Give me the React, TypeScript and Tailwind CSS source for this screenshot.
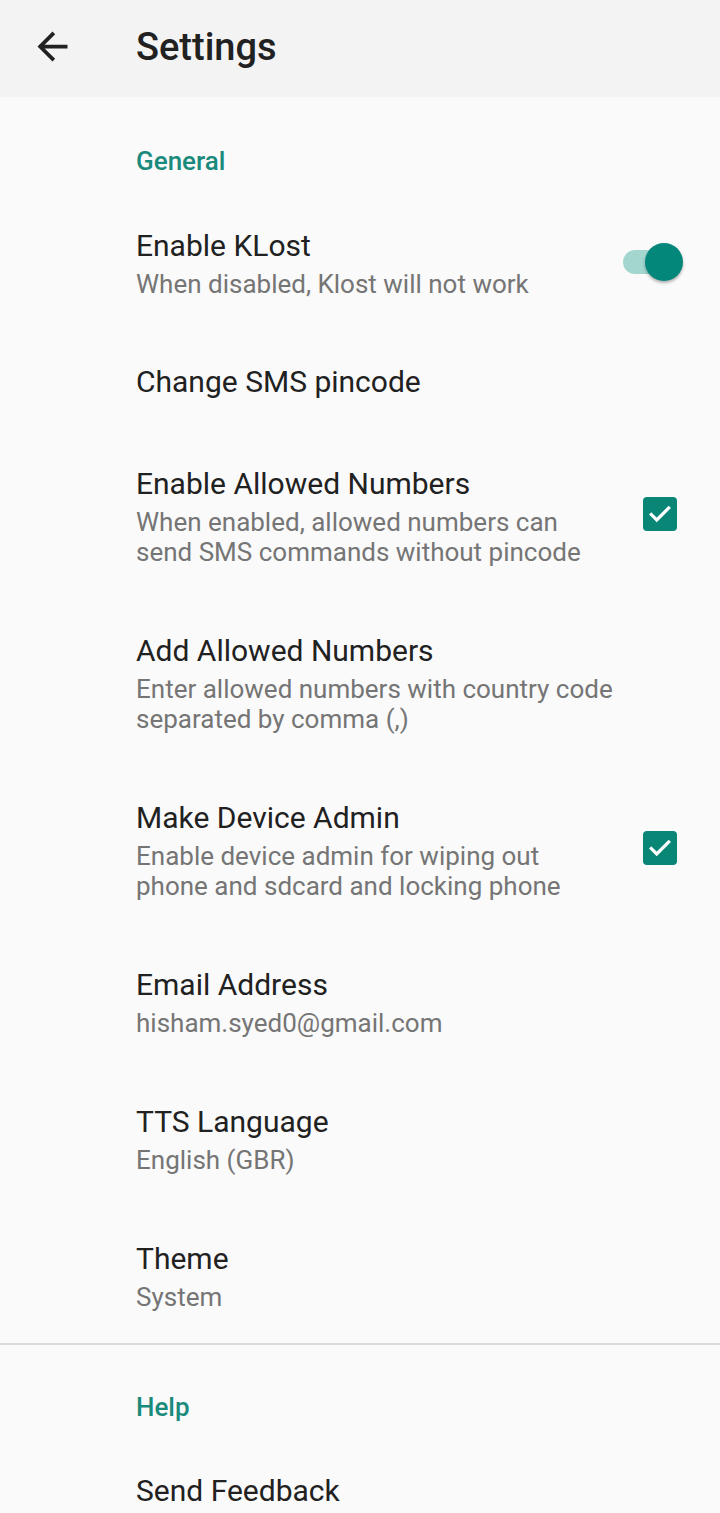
import type { ReactNode } from "react";

type Item = {
  title: string;
  lines?: string[];
  widget?: "switch" | "check";
  last?: boolean;
};

const general: Item[] = [
  { title: "Enable KLost", lines: ["When disabled, Klost will not work"], widget: "switch" },
  { title: "Change SMS pincode" },
  {
    title: "Enable Allowed Numbers",
    lines: ["When enabled, allowed numbers can", "send SMS commands without pincode"],
    widget: "check",
  },
  {
    title: "Add Allowed Numbers",
    lines: ["Enter allowed numbers with country code", "separated by comma (,)"],
  },
  {
    title: "Make Device Admin",
    lines: ["Enable device admin for wiping out", "phone and sdcard and locking phone"],
    widget: "check",
  },
  { title: "Email Address", lines: ["hisham.syed0@gmail.com"] },
  { title: "TTS Language", lines: ["English (GBR)"] },
  { title: "Theme", lines: ["System"], last: true },
];

function Switch() {
  return (
    <div className="relative mb-[4px] w-[60px] h-[38px] flex items-center">
      <div className="w-[52px] h-[24px] rounded-full bg-[#a3d6cf]" />
      <div className="absolute right-0 top-0 w-[38px] h-[38px] rounded-full bg-[#03877a] shadow-[0_2px_3px_rgba(0,0,0,0.3)]" />
    </div>
  );
}

function Check() {
  return (
    <div className="mr-[6px] mb-[6px] w-[34px] h-[34px] rounded-[4px] bg-[#0a8676] flex items-center justify-center">
      <svg width="26" height="26" viewBox="0 0 24 24" fill="none">
        <path d="M4 12.5l5 5L20 6.5" stroke="white" strokeWidth="3" strokeLinecap="square" />
      </svg>
    </div>
  );
}

function Category({ children, top = "pt-[49px]" }: { children: ReactNode; top?: string }) {
  return (
    <div className={`pl-[136px] ${top} pb-[19px] text-[26px] leading-[30px] font-medium text-[#1a8a7c]`}>
      {children}
    </div>
  );
}

function Row({ item }: { item: Item }) {
  const single = !item.lines;
  const pad = single ? "pt-[32px] pb-[33px]" : item.last ? "pt-[33px] pb-[31px]" : "py-[33px]";
  return (
    <div className={`flex items-center pl-[136px] pr-[37px] ${pad}`}>
      <div className="flex-1">
        <div className="text-[30px] leading-[36px] text-[#212121]">{item.title}</div>
        {item.lines && (
          <div className="mt-[5px] text-[26px] leading-[30px] text-[#757575]">
            {item.lines.map((l) => (
              <div key={l} className="whitespace-nowrap">
                {l}
              </div>
            ))}
          </div>
        )}
      </div>
      {item.widget === "switch" && <Switch />}
      {item.widget === "check" && <Check />}
    </div>
  );
}

export default function App() {
  return (
    <div
      className="w-[720px] h-[1513px] overflow-hidden bg-[#fafafa]"
      style={{ fontFamily: "Roboto, 'Noto Sans', sans-serif" }}
    >
      {/* app bar */}
      <div className="h-[97px] pb-[4px] bg-[#f3f3f3] flex items-center">
        <div className="w-[136px] flex items-center pl-[30px]">
          <svg width="45" height="45" viewBox="0 0 24 24" fill="#212121">
            <path d="M20 11H7.83l5.59-5.59L12 4l-8 8 8 8 1.41-1.41L7.83 13H20v-2z" />
          </svg>
        </div>
        <div className="text-[38px] font-medium text-[#212121] leading-none">Settings</div>
      </div>

      <Category>General</Category>
      {general.map((it) => (
        <Row key={it.title} item={it} />
      ))}

      <div className="h-[2px] bg-[#dadada]" />

      <Category top="pt-[47px]">Help</Category>
      <Row item={{ title: "Send Feedback" }} />
    </div>
  );
}
